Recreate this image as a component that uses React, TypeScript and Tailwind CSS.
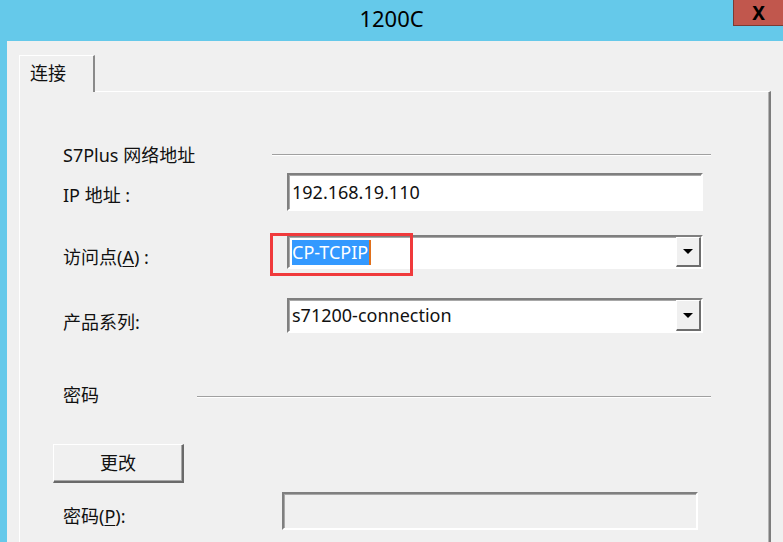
import React from 'react'

const font = { fontFamily: '"Noto Sans", "Noto Sans CJK SC", sans-serif' }

function Sunken({ className = '', children }: { className?: string; children?: React.ReactNode }) {
  return (
    <div
      className={`border-2 border-t-[#7f7f7f] border-l-[#7f7f7f] border-b-white border-r-white shadow-[inset_1px_1px_0_#a8a8a8] ${className}`}
    >
      {children}
    </div>
  )
}

function DropButton() {
  return (
    <div className="ml-auto w-[25px] h-full bg-[#f0f0f0] border-t border-l border-white border-r-2 border-b-2 border-r-[#6d6d6d] border-b-[#6d6d6d] flex items-center justify-center">
      <div className="w-0 h-0 border-l-[5px] border-r-[5px] border-t-[5px] border-l-transparent border-r-transparent border-t-black" />
    </div>
  )
}

function Header({ label, textW, lineW }: { label: string; textW: string; lineW: string }) {
  return (
    <div className="flex items-center h-[20px] ml-[10px]">
      <span className={`${textW} text-[18px] leading-none text-[#111]`}>{label}</span>
      <div className={`${lineW} h-[2px] border-t border-[#a0a0a0] border-b border-b-white`} />
    </div>
  )
}

export default function App() {
  return (
    <div className="w-[783px] h-[542px] bg-[#65c9ea] overflow-hidden flex flex-col" style={font}>
      <div className="relative h-[41px] shrink-0 flex items-center justify-center">
        <span className="text-[22px] leading-none text-black -mt-[6px]">1200C</span>
        <div className="absolute right-0 top-0 w-[50px] h-[26px] bg-[#c1574d] border-l border-b border-[#7b3b34] flex items-center justify-center">
          <span className="text-[19px] font-bold leading-[22px] text-black">X</span>
        </div>
      </div>

      <div className="flex-1 ml-[7px] bg-[#f0f0f0] pt-[14px] pl-[12px] flex flex-col">
        <div className="relative z-10 -mb-px w-[76px] h-[37px] bg-[#f0f0f0] border-t border-l border-white border-r-2 border-r-[#8a8a8a] pl-[10px] pt-[4px]">
          <span className="text-[18px] text-[#111] leading-[26px]">连接</span>
        </div>

        <div className="flex-1 w-[752px] border-t border-l border-white border-r-2 border-r-[#7c7c7c] shadow-[inset_-1px_0_0_#b4b4b4] pl-[33px] flex flex-col">
          <div className="mt-[53px]">
            <Header label="S7Plus 网络地址" textW="w-[209px]" lineW="w-[439px]" />
          </div>

          <div className="mt-[8px] flex items-center h-[38px]">
            <span className="ml-[10px] w-[224px] mt-[6px] text-[18px] text-[#111]">IP 地址 :</span>
            <Sunken className="w-[416px] h-[38px] bg-white flex items-center pl-[3px]">
              <span className="text-[18px] text-[#111]">192.168.19.110</span>
            </Sunken>
          </div>

          <div className="mt-[24px] flex items-center h-[34px]">
            <span className="ml-[10px] w-[224px] mt-[10px] text-[18px] text-[#111]">
              访问点(<span className="underline underline-offset-2">A</span>) :
            </span>
            <div className="relative">
              <Sunken className="w-[416px] h-[34px] bg-white flex items-stretch pl-[3px]">
                <div className="flex items-center">
                  <span className="bg-[#3399ff] text-white text-[18px] leading-[25px] pr-[1px]">CP-TCPIP</span>
                  <span className="w-[2px] h-[25px] bg-[#e0701c]" />
                </div>
                <DropButton />
              </Sunken>
              <div className="absolute left-[-17px] top-[-2px] w-[143px] h-[43px] border-[3px] border-[#f03a3c]" />
            </div>
          </div>

          <div className="mt-[29px] flex items-center h-[35px]">
            <span className="ml-[10px] w-[224px] mt-[14px] text-[18px] text-[#111]">产品系列:</span>
            <Sunken className="w-[416px] h-[35px] bg-white flex items-stretch pl-[3px]">
              <div className="flex items-center">
                <span className="text-[18px] text-[#111]">s71200-connection</span>
              </div>
              <DropButton />
            </Sunken>
          </div>

          <div className="mt-[52px]">
            <div className="flex items-center h-[20px] ml-[10px]">
              <span className="w-[134px] text-[18px] leading-none text-[#111]">密码</span>
              <div className="w-[514px] h-[2px] mt-[3px] border-t border-[#a0a0a0] border-b border-b-white" />
            </div>
          </div>

          <div className="mt-[39px] w-[131px] h-[39px] bg-[#f0f0f0] border-t border-l border-white border-r-2 border-b-2 border-r-[#6a6a6a] border-b-[#6a6a6a] shadow-[inset_-1px_-1px_0_#a8a8a8] flex items-center justify-center">
            <span className="text-[18px] text-[#111]">更改</span>
          </div>

          <div className="mt-[9px] flex items-center h-[38px]">
            <span className="ml-[10px] w-[219px] mt-[10px] text-[18px] text-[#111]">
              密码(<span className="underline underline-offset-2">P</span>):
            </span>
            <Sunken className="w-[416px] h-[38px] bg-[#f0f0f0]" />
          </div>
        </div>
      </div>
    </div>
  )
}
